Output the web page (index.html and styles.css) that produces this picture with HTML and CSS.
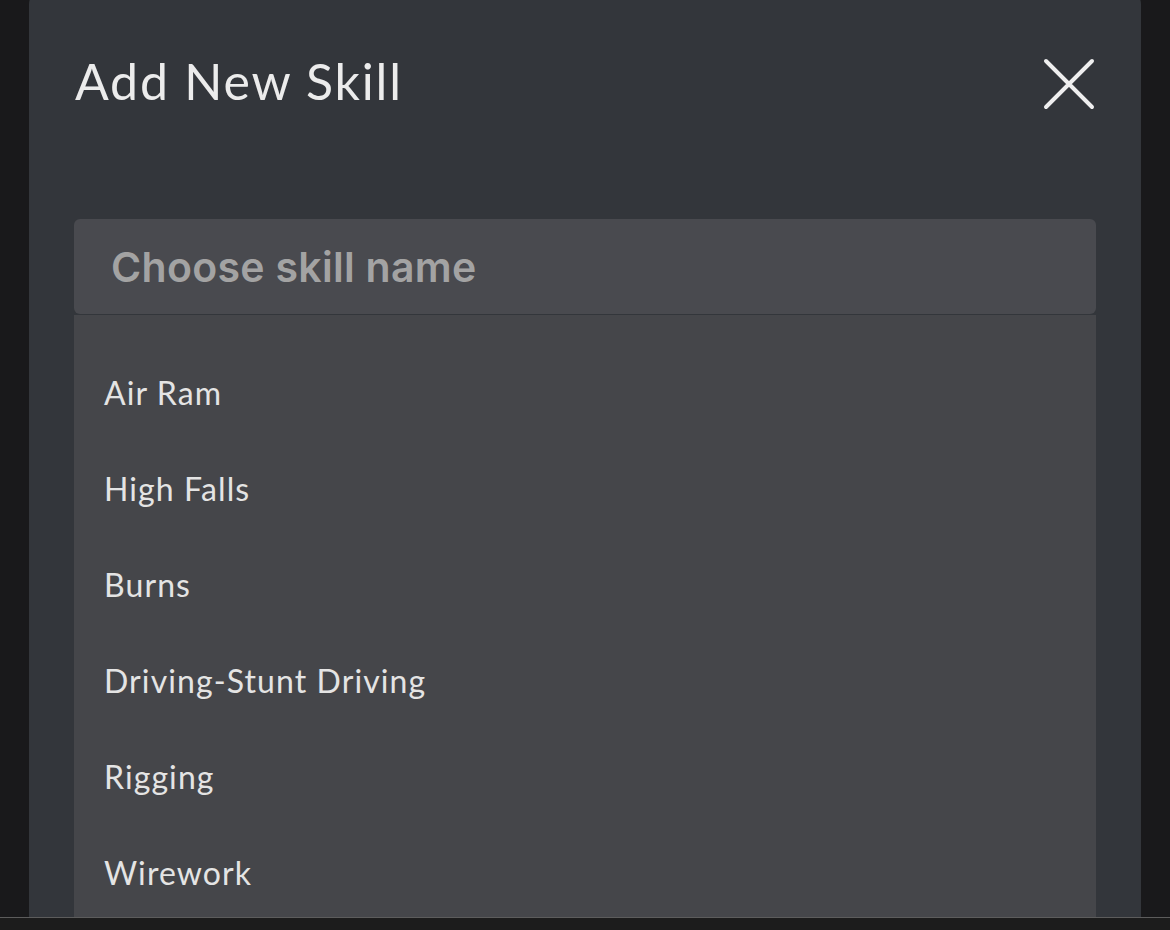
FILE: index.html
```html
<!DOCTYPE html>
<html lang="en">
<head>
    <meta charset="UTF-8">
    <meta name="viewport" content="width=device-width, initial-scale=1.0">
    <title>Add New Skill</title>
    <link rel="stylesheet" href="styles.css">
</head>
<body>
<div class="screen">
    <div class="modal">
        <div class="modal-head">
            <h1 class="modal-title">Add New Skill</h1>
            <button class="close-btn" aria-label="Close">
                <svg width="52" height="52" viewBox="0 0 52 52">
                    <path d="M3 3 L49 49 M49 3 L3 49" stroke="#efefef" stroke-width="4" stroke-linecap="round" fill="none"/>
                </svg>
            </button>
        </div>
        <div class="skill-picker">
            <input class="skill-input" type="text" placeholder="Choose skill name">
            <ul class="skill-list">
                <li>Air Ram</li>
                <li>High Falls</li>
                <li>Burns</li>
                <li>Driving-Stunt Driving</li>
                <li>Rigging</li>
                <li>Wirework</li>
            </ul>
        </div>
    </div>
</div>
<div class="bottom-bar"></div>
</body>
</html>
```

FILE: styles.css
```css
*{
    margin: 0;
    padding: 0;
    box-sizing: border-box;
}
html,body{
    width: 100%;
    height: 100%;
}
body{
    background: #19191b;
    overflow: hidden;
    font-family: Lato, "Open Sans", sans-serif;
}
.screen{
    height: 917px;
    overflow: hidden;
    padding: 0 29px;
}
.modal{
    margin-top: -8px;
    height: 940px;
    background: #33363b;
    border-radius: 12px;
    padding: 0 45px;
}
.modal-head{
    display: flex;
    align-items: center;
    justify-content: space-between;
    height: 182px;
    padding-bottom: 4px;
}
.modal-title{
    font-weight: 400;
    font-size: 50px;
    color: #ececec;
    letter-spacing: 1.8px;
    padding-left: 1px;
}
.close-btn{
    background: none;
    border: none;
    width: 52px;
    height: 52px;
    margin-top: 6px;
    margin-right: 1px;
}
.close-btn svg{
    display: block;
}
.skill-picker{
    margin-top: 45px;
}
.skill-input{
    display: block;
    width: 100%;
    height: 95px;
    border: none;
    outline: none;
    border-radius: 6px;
    background: #494a4f;
    padding: 0 37px;
    font-family: Inter, Roboto, sans-serif;
    font-weight: 600;
    font-size: 41px;
    letter-spacing: 0.3px;
    color: #e6e6e6;
}
.skill-input::placeholder{
    color: #a3a3a3;
}
.skill-list{
    list-style: none;
    margin-top: 1px;
    background: #45464a;
    padding-top: 30px;
}
.skill-list li{
    height: 96px;
    line-height: 96px;
    padding-left: 30px;
    font-size: 32px;
    letter-spacing: 1.1px;
    color: #e4e4e4;
}
.bottom-bar{
    height: 13px;
    border-top: 1px solid #5c5c5c;
    background: #1c1c1c;
}
```
